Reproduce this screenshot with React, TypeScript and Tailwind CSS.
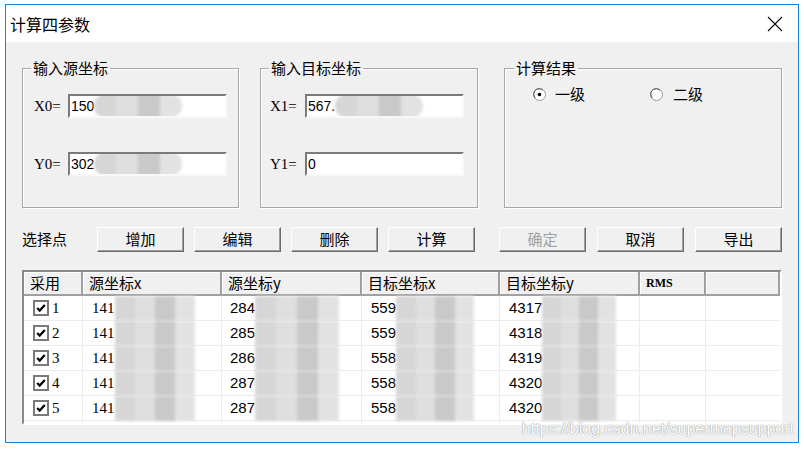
import React from 'react'

const cjk = { fontFamily: '"Noto Sans CJK SC", "Liberation Sans", sans-serif' }
const serif = { fontFamily: '"Liberation Serif", "Noto Sans CJK SC", serif' }
const sans = { fontFamily: '"Liberation Sans", "Noto Sans CJK SC", sans-serif' }

// ── Mosaic blur that hides the coordinate digits ─────────────────────────────
function Blob({ w = 80, h = 25, round = true }: { w?: number; h?: number; round?: boolean }) {
  return (
    <div className="flex blur-[1.5px]" style={{ width: w, height: h }}>
      <div className={`flex-1 bg-[#d6d6d6] ${round ? 'rounded-l-full' : ''}`} />
      <div className="flex-1 bg-[#dedede]" />
      <div className="flex-1 bg-[#c9c9c9]" />
      <div className={`flex-1 bg-[#e2e2e2] ${round ? 'rounded-r-full' : ''}`} />
    </div>
  )
}

// ── Sunken edit box ──────────────────────────────────────────────────────────
function Edit({ text, blur }: { text: string; blur?: boolean }) {
  return (
    <div
      className="flex h-[24px] w-[159px] items-center overflow-hidden border-2 border-t-[#7a7a7a] border-l-[#7a7a7a] border-b-[#f8f8f8] border-r-[#f8f8f8] bg-white pl-[1px] text-[14px] text-black"
      style={sans}
    >
      <span>{text}</span>
      {blur && <Blob w={88} h={24} />}
    </div>
  )
}

function Group({
  title,
  width,
  legendMl,
  children,
}: {
  title: string
  width: string
  legendMl: string
  children: React.ReactNode
}) {
  return (
    <fieldset
      className={`h-[150px] border border-[#a8a8a8] shadow-[inset_1px_1px_0_#fff,1px_1px_0_#fff] ${width}`}
    >
      <legend className={`px-[2px] text-[15px] leading-[20px] text-black ${legendMl}`} style={cjk}>
        {title}
      </legend>
      {children}
    </fieldset>
  )
}

function Btn({ label, disabled, className = '' }: { label: string; disabled?: boolean; className?: string }) {
  return (
    <div
      className={`flex h-[25px] w-[87px] items-center justify-center border border-t-white border-l-white border-b-[#6a6a6a] border-r-[#6a6a6a] bg-[#f0f0f0] text-[15px] shadow-[inset_-1px_-1px_0_#a0a0a0] ${
        disabled ? 'text-[#a0a0a0]' : 'text-black'
      } ${className}`}
      style={cjk}
    >
      {label}
    </div>
  )
}

function Radio({ checked }: { checked?: boolean }) {
  return (
    <svg width="13" height="13" viewBox="0 0 13 13">
      <circle cx="6.5" cy="6.5" r="6" fill="#fff" stroke="#9a9a9a" />
      <path d="M2.3 9.8 A5 5 0 0 1 9.8 2.3" fill="none" stroke="#555" strokeWidth="1" />
      {checked && <circle cx="6.5" cy="6.5" r="1.8" fill="#000" />}
    </svg>
  )
}

function Check() {
  return (
    <svg width="16" height="16" viewBox="0 0 16 16">
      <rect x="1" y="1" width="14" height="14" fill="#fff" stroke="#7a7a7a" strokeWidth="2" />
      <path d="M4.2 8 L6.7 10.6 L11.8 5" fill="none" stroke="#000" strokeWidth="2.2" />
    </svg>
  )
}

const cols = [59, 139, 140, 138, 140, 66, 74]
const headers = ['采用', '源坐标x', '源坐标y', '目标坐标x', '目标坐标y', 'RMS', '']

const rows = [
  ['141', '284', '559', '4317'],
  ['141', '285', '559', '4318'],
  ['141', '286', '558', '4319'],
  ['141', '287', '558', '4320'],
  ['141', '287', '558', '4320'],
]

function Table() {
  return (
    <div className="mt-[18px] h-[155px] w-[760px] overflow-hidden border-2 border-t-[#8a8a8a] border-l-[#8a8a8a] border-b-white border-r-white bg-white">
      {/* header */}
      <div className="flex h-[24px] border-b-2 border-[#a0a0a0] bg-[#f0f0f0]">
        {headers.map((h, i) => (
          <div
            key={i}
            className={`flex items-center border-r-2 border-r-[#a0a0a0] pl-[6px] text-black shadow-[inset_1px_1px_0_#fff] ${
              h === 'RMS' ? 'font-bold' : ''
            }`}
            style={{ width: cols[i], ...(h === 'RMS' ? serif : cjk), fontSize: h === 'RMS' ? 12 : 15 }}
          >
            {h}
          </div>
        ))}
      </div>
      {rows.map((r, ri) => (
        <div key={ri} className="flex h-[25px] border-b border-[#ececec]">
          <div className="flex items-center gap-[3px] border-r border-[#ececec] pl-[9px] text-[15px]" style={{ width: cols[0], ...serif }}>
            <Check />
            <span>{ri + 1}</span>
          </div>
          <div className="flex items-center border-r border-[#ececec] pl-[9px] text-[15px]" style={{ width: cols[1], ...serif }}>
            <span>{r[0]}</span>
            <Blob round={false} />
          </div>
          <div className="flex items-center border-r border-[#ececec] pl-[8px] text-[15px]" style={{ width: cols[2], ...sans }}>
            <span>{r[1]}</span>
            <Blob w={84} round={false} />
          </div>
          <div className="flex items-center border-r border-[#ececec] pl-[9px] text-[15px]" style={{ width: cols[3], ...sans }}>
            <span>{r[2]}</span>
            <Blob w={78} round={false} />
          </div>
          <div className="flex items-center border-r border-[#ececec] pl-[9px] text-[15px]" style={{ width: cols[4], ...sans }}>
            <span>{r[3]}</span>
            <Blob w={74} round={false} />
          </div>
          <div className="border-r border-[#ececec]" style={{ width: cols[5] }} />
          <div style={{ width: cols[6] }} />
        </div>
      ))}
      <div className="flex h-[4px]">
        {cols.map((w, i) => (
          <div key={i} className="border-r border-[#ececec]" style={{ width: w }} />
        ))}
      </div>
    </div>
  )
}

export default function App() {
  return (
    <div className="h-[450px] w-[804px] overflow-hidden bg-white">
      <div className="relative ml-[5px] mt-[4px] flex h-[439px] w-[794px] flex-col border border-[#1883d7] bg-[#f0f0f0]">
        {/* title bar */}
        <div className="flex h-[37px] items-center justify-between bg-white pl-[4px] pr-[15px]">
          <span className="text-[16px] text-black" style={cjk}>
            计算四参数
          </span>
          <svg width="16" height="16" viewBox="0 0 16 16">
            <path d="M1 1 L15 15 M15 1 L1 15" stroke="#111" strokeWidth="1.2" />
          </svg>
        </div>

        {/* body */}
        <div className="flex flex-col pl-[16px]">
          <div className="mt-[16px] flex">
            <Group title="输入源坐标" width="w-[217px]" legendMl="ml-[8px]">
              <div className="flex flex-col pl-[11px]">
                <div className="mt-[16px] flex items-center">
                  <span className="w-[34px] text-[15px]" style={serif}>X0=</span>
                  <Edit text="150" blur />
                </div>
                <div className="mt-[34px] flex items-center">
                  <span className="w-[34px] text-[15px]" style={serif}>Y0=</span>
                  <Edit text="302" blur />
                </div>
              </div>
            </Group>
            <div className="w-[21px]" />
            <Group title="输入目标坐标" width="w-[218px]" legendMl="ml-[8px]">
              <div className="flex flex-col pl-[9px]">
                <div className="mt-[16px] flex items-center">
                  <span className="w-[35px] text-[15px]" style={serif}>X1=</span>
                  <Edit text="567." blur />
                </div>
                <div className="mt-[34px] flex items-center">
                  <span className="w-[35px] text-[15px]" style={serif}>Y1=</span>
                  <Edit text="0" />
                </div>
              </div>
            </Group>
            <div className="w-[26px]" />
            <Group title="计算结果" width="w-[278px]" legendMl="ml-[9px]">
              <div className="mt-[5px] flex items-center pl-[28px] text-[15px]" style={cjk}>
                <div className="flex w-[117px] items-center gap-[9px]">
                  <Radio checked />
                  <span>一级</span>
                </div>
                <div className="flex items-center gap-[10px]">
                  <Radio />
                  <span>二级</span>
                </div>
              </div>
            </Group>
          </div>

          {/* buttons */}
          <div className="mt-[19px] flex items-center">
            <span className="w-[75px] text-[15px]" style={cjk}>选择点</span>
            <div className="flex gap-[10px]">
              <Btn label="增加" />
              <Btn label="编辑" />
              <Btn label="删除" />
              <Btn label="计算" className="w-[86px]" />
            </div>
            <div className="ml-[24px] flex gap-[11px]">
              <Btn label="确定" disabled />
              <Btn label="取消" />
              <Btn label="导出" className="w-[86px]" />
            </div>
          </div>

          <Table />
        </div>

        {/* watermark */}
        <span
          className="absolute bottom-[1px] right-[4px] text-[16px] text-white [text-shadow:0_0_1px_#9a9a9a,0_0_1px_#9a9a9a]"
          style={sans}
        >
          https://blog.csdn.net/supermapsupport
        </span>
      </div>
    </div>
  )
}
